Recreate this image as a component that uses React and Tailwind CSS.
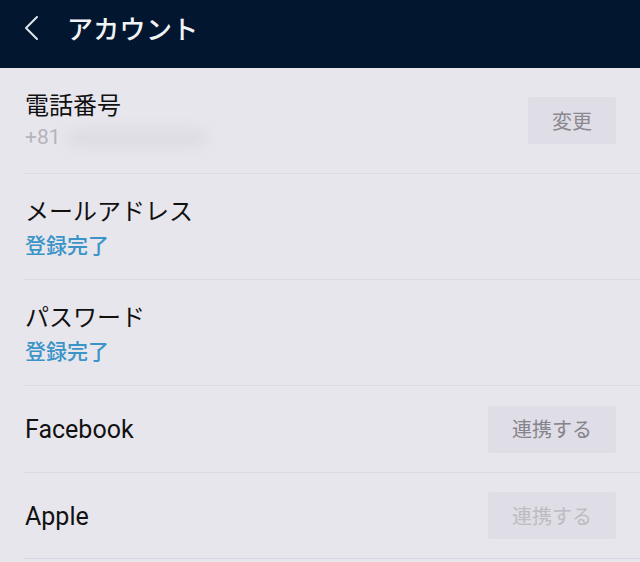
import React from "react";

const FONT = { fontFamily: '"Noto Sans CJK JP", "Noto Sans", Roboto, sans-serif' };
const LATIN = { fontFamily: 'Roboto, "Noto Sans", sans-serif' };

function Row({ label, sub, button, buttonClass, height }) {
  return (
    <div className={`flex items-center pl-[25px] pr-[24px] ${height}`}>
      <div className="flex-1 flex flex-col">
        <div className="text-[24px] leading-[30px] text-[#111]">{label}</div>
        {sub}
      </div>
      {button && (
        <button className={`h-[47px] rounded-[3px] bg-[#dfdde5] text-[20px] ${buttonClass}`}>{button}</button>
      )}
    </div>
  );
}

function Divider({ className = "bg-[#dcdae2]" }) {
  return <div className={`ml-[24px] h-px ${className}`} />;
}

export default function App() {
  return (
    <div className="w-[640px] h-[562px] overflow-hidden bg-[#e8e6ed]" style={FONT}>
      <header className="h-[68px] bg-[#03162f] flex items-start pt-[12px]">
        <svg className="ml-[22px] mt-[2px]" width="20" height="28" viewBox="0 0 20 28" fill="none">
          <path d="M15 3 L4 14 L15 25" stroke="#dfe3ea" strokeWidth="2" strokeLinecap="round" strokeLinejoin="round" />
        </svg>
        <h1 className="ml-[25px] text-[26px] leading-[32px] font-medium text-[#f2f3f6] tracking-[0.3px]">アカウント</h1>
      </header>

      <Row
        height="h-[105px]"
        label="電話番号"
        sub={
          <div className="flex items-center h-[30px] mt-[4px]">
            <span className="text-[21px] text-[#b5b3bc]" style={LATIN}>+81</span>
            <div className="ml-[6px] h-[18px] w-[140px] rounded-full bg-[#dddbe3] blur-[7px]" />
          </div>
        }
        button="変更"
        buttonClass="w-[88px] text-[#8a8890]"
      />
      <Divider />
      <Row
        height="h-[105px]"
        label="メールアドレス"
        sub={<div className="text-[21px] leading-[30px] mt-[4px] font-medium text-[#3a94c8]">登録完了</div>}
      />
      <Divider />
      <Row
        height="h-[105px]"
        label="パスワード"
        sub={<div className="text-[21px] leading-[30px] mt-[4px] font-medium text-[#3a94c8]">登録完了</div>}
      />
      <Divider />
      <Row
        height="h-[86px]"
        label={<span className="text-[25px]" style={LATIN}>Facebook</span>}
        button="連携する"
        buttonClass="w-[128px] text-[#85838c]"
      />
      <Divider />
      <Row
        height="h-[85px]"
        label={<span className="text-[25px]" style={LATIN}>Apple</span>}
        button="連携する"
        buttonClass="w-[128px] text-[#bdbbc3]"
      />
      <Divider className="bg-[#d8d8ec]" />
    </div>
  );
}
